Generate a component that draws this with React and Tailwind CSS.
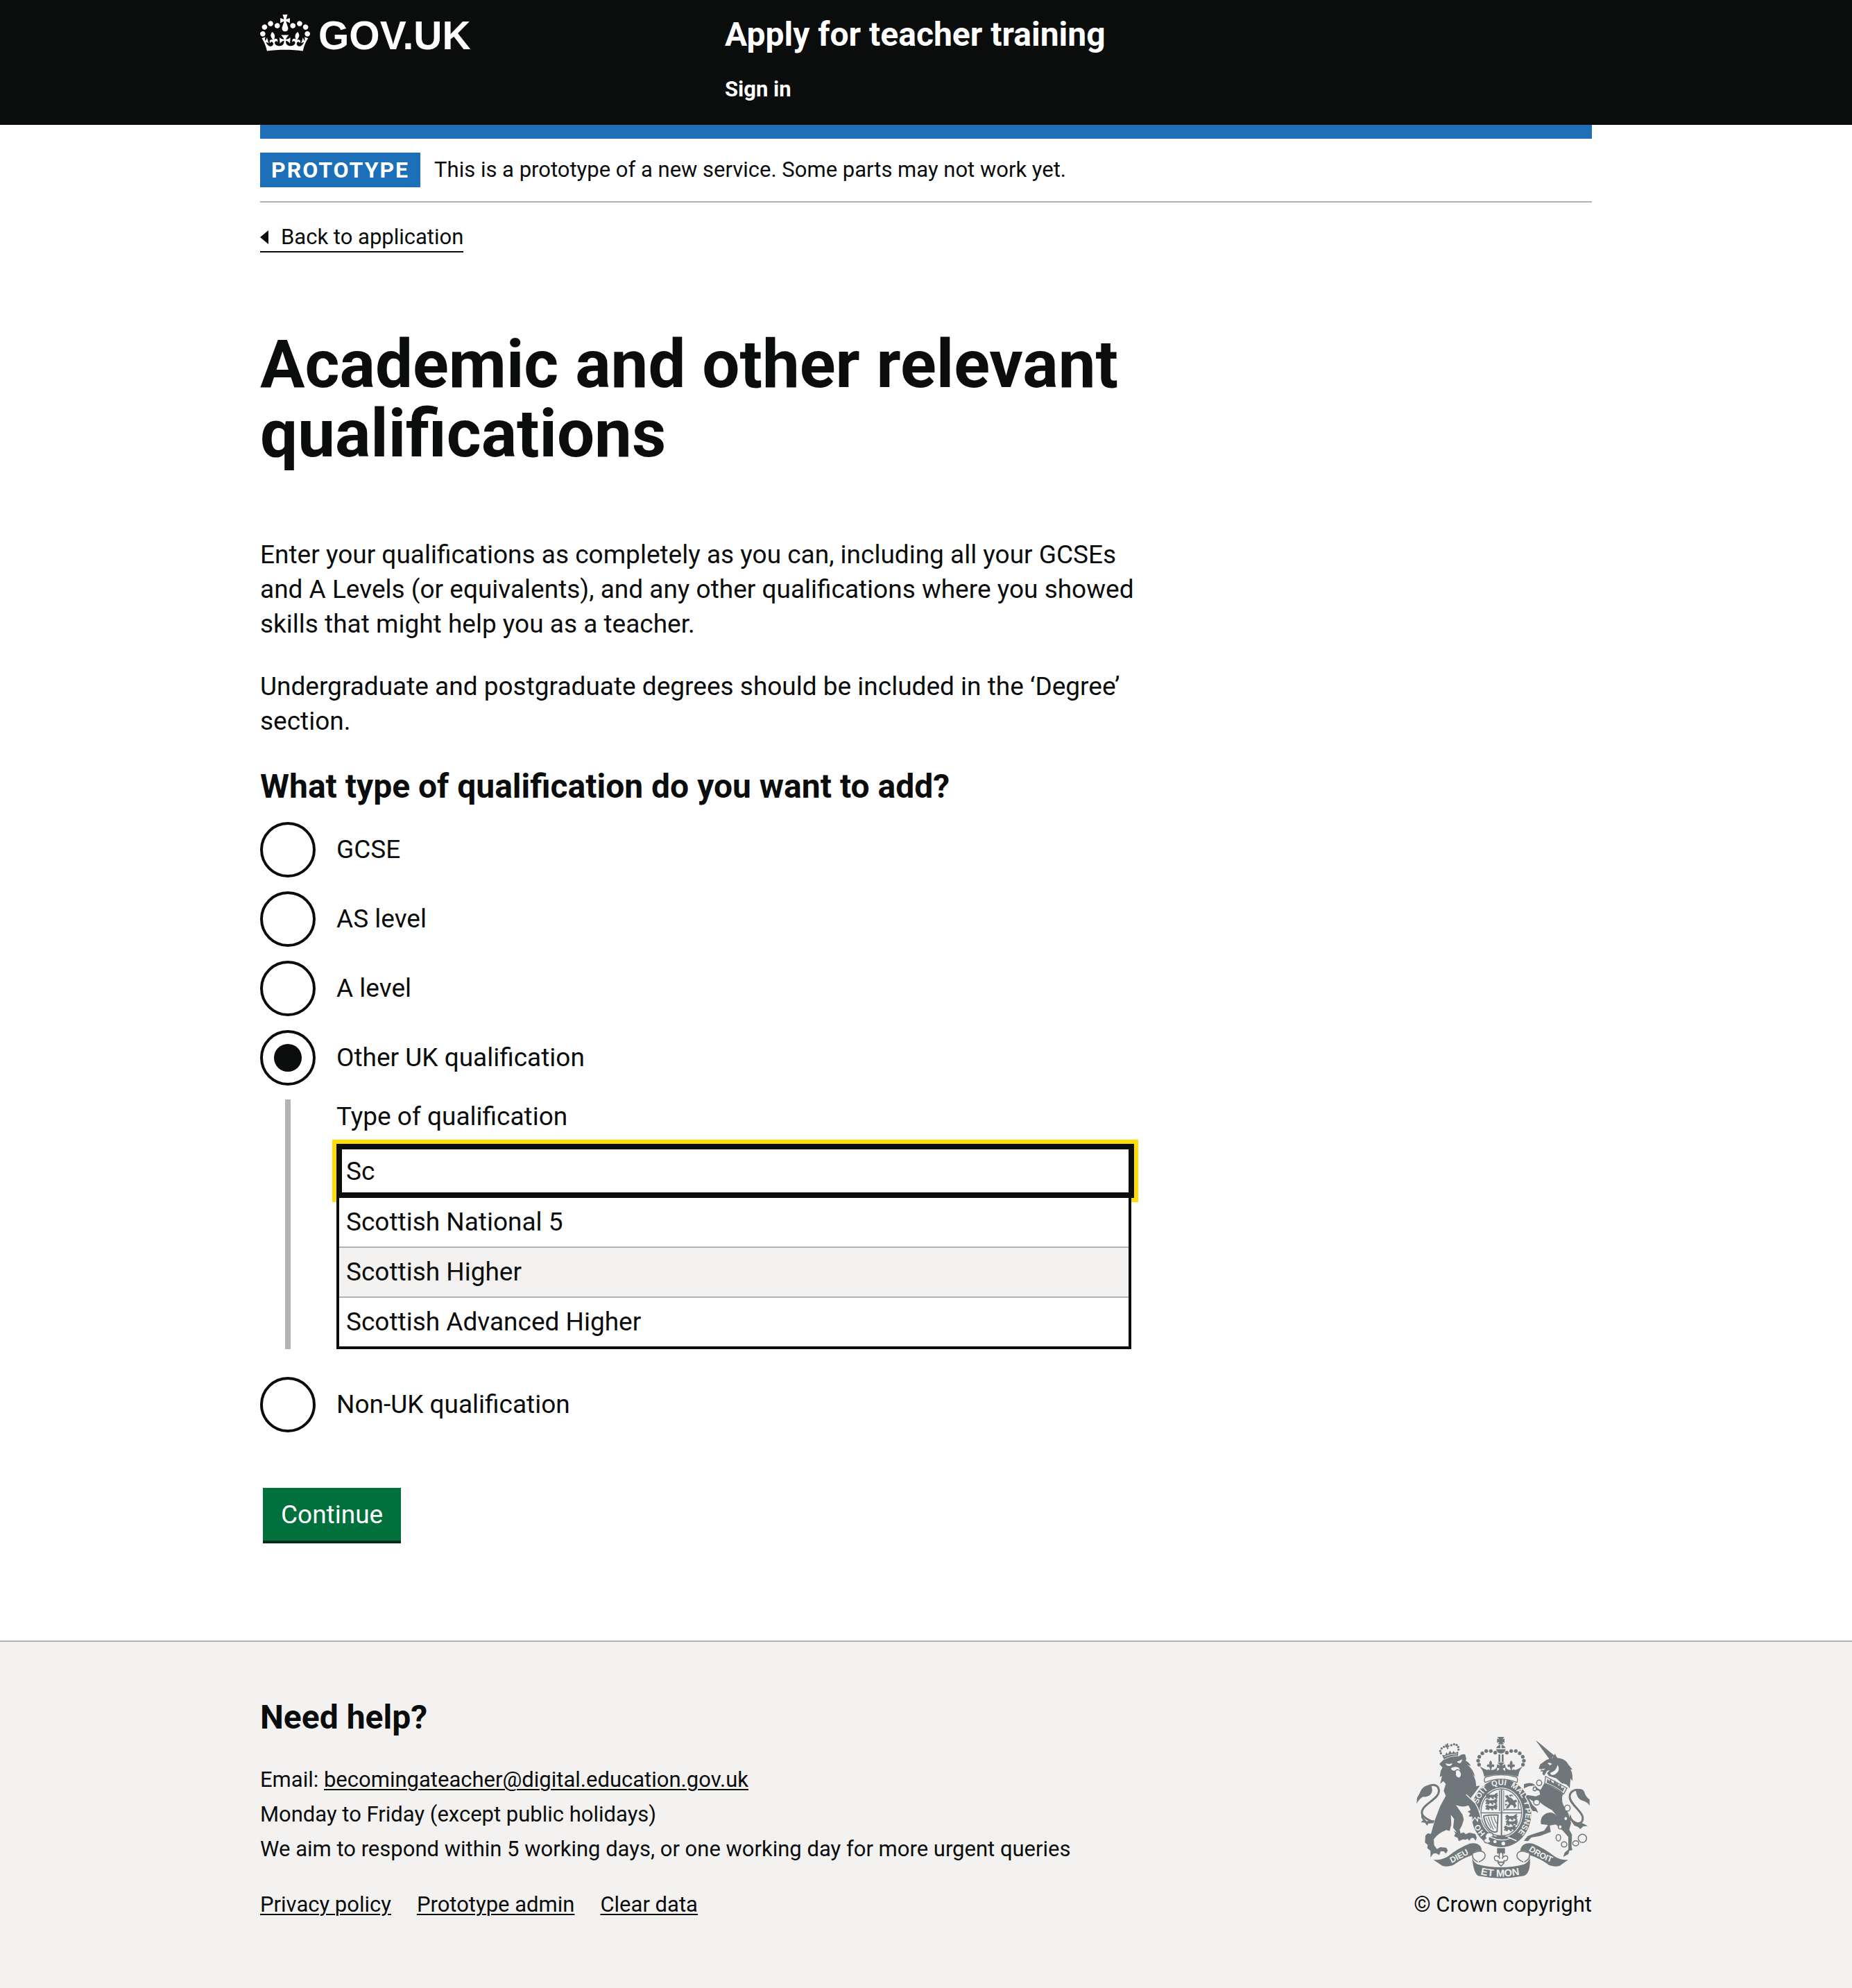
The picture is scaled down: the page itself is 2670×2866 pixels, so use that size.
import { useState } from 'react';

function Crown() {
  return (
    <svg aria-hidden="true" viewBox="0 0 132 97" className="h-[53px] w-[72px]" fill="currentColor">
      <path
        fillRule="evenodd"
        d="M25 30.2c3.5 1.5 7.7-.2 9.1-3.7 1.5-3.6-.2-7.8-3.9-9.2-3.6-1.4-7.6.3-9.1 3.9-1.4 3.5.3 7.5 3.9 9zM9 39.5c3.6 1.5 7.8-.2 9.2-3.7 1.5-3.6-.2-7.8-3.9-9.1-3.6-1.5-7.6.2-9.1 3.8-1.4 3.5.3 7.5 3.8 9zM4.4 57.2c3.5 1.5 7.7-.2 9.1-3.8 1.5-3.6-.2-7.7-3.9-9.1-3.5-1.5-7.6.3-9.1 3.8-1.4 3.5.3 7.6 3.9 9.1zm38.3-21.4c3.5 1.5 7.7-.2 9.1-3.8 1.5-3.6-.2-7.7-3.9-9.1-3.6-1.5-7.6.3-9.1 3.8-1.3 3.6.4 7.7 3.9 9.1zm64.4-5.6c-3.6 1.5-7.8-.2-9.1-3.7-1.5-3.6.2-7.8 3.8-9.2 3.6-1.4 7.7.3 9.2 3.9 1.3 3.5-.4 7.5-3.9 9zm15.9 9.3c-3.6 1.5-7.7-.2-9.1-3.7-1.5-3.6.2-7.8 3.7-9.1 3.6-1.5 7.7.2 9.2 3.8 1.5 3.5-.3 7.5-3.8 9zm4.7 17.7c-3.6 1.5-7.8-.2-9.2-3.8-1.5-3.6.2-7.7 3.9-9.1 3.6-1.5 7.7.3 9.2 3.8 1.3 3.5-.4 7.6-3.9 9.1zM89.3 35.8c-3.6 1.5-7.8-.2-9.2-3.8-1.4-3.6.2-7.7 3.9-9.1 3.6-1.5 7.7.3 9.2 3.8 1.4 3.6-.3 7.7-3.9 9.1zM69.7 17.7l8.9 4.7V9.3l-8.9 2.8c-.2-.3-.5-.6-.9-.9L72.4 0H59.6l3.5 11.2c-.3.3-.6.5-.9.9l-8.8-2.8v13.1l8.8-4.7c.3.3.6.7.9.9l-5 15.4v.1c-.2.8-.4 1.6-.4 2.4 0 4.1 3.1 7.5 7 8.1h.2c.3 0 .7.1 1 .1.4 0 .7 0 1-.1h.2c4-.6 7.1-4.1 7.1-8.1 0-.8-.1-1.7-.4-2.4V34l-5.1-15.4c.4-.2.7-.6 1-.9zM66 92.8c16.9 0 32.8 1.1 47.1 3.2 4-16.9 8.9-26.7 14-33.5l-9.6-3.4c1 4.9 1.1 7.2 0 10.2-1.5-1.4-3-4.3-4.2-8.7L108.6 76c2.8-2 5-3.2 7.5-3.3-4.4 9.4-10 11.9-13.6 11.2-4.3-.8-6.3-4.6-5.6-7.9 1-4.7 5.7-5.9 8-.5 4.3-8.7-3-11.4-7.6-8.8 7.1-7.2 7.9-13.5 2.1-21.1-8 6.1-8.1 12.3-4.5 20.8-4.7-5.4-12.1-2.5-9.5 6.2 3.4-5.2 7.9-2 7.2 3.1-.6 4.3-6.4 7.8-13.5 7.2-10.3-.9-10.9-8-11.2-13.8 2.5-.5 7.1 1.8 11 7.3L80.2 60c-4.1 4.4-8 5.3-12.3 5.4 1.4-4.4 8-11.6 8-11.6H55.5s6.4 7.2 7.9 11.6c-4.2-.1-8-1-12.3-5.4l1.4 16.4c3.9-5.5 8.5-7.7 10.9-7.3-.3 5.8-.9 12.8-11.1 13.8-7.2.6-12.9-2.9-13.5-7.2-.7-5 3.8-8.3 7.1-3.1 2.7-8.7-4.6-11.6-9.4-6.2 3.7-8.5 3.6-14.7-4.6-20.8-5.8 7.6-5 13.9 2.2 21.1-4.7-2.6-11.9.1-7.7 8.8 2.3-5.5 7.1-4.2 8.1.5.7 3.3-1.3 7.1-5.7 7.9-3.5.7-9-1.8-13.5-11.2 2.5.1 4.7 1.3 7.5 3.3l-4.7-15.4c-1.2 4.4-2.7 7.2-4.3 8.7-1.1-3-.9-5.3 0-10.2l-9.5 3.4c5 6.9 9.9 16.7 14 33.5 14.8-2.1 30.8-3.2 47.7-3.2z"
      />
    </svg>
  );
}

const INK = '#6f777b';
const PAPER = '#f3f2f1';

const CROWN_BEADS = [
  [428, 135], [409, 128], [389, 128], [372, 138], [359, 153], [354, 170], [358, 187],
  [478, 135], [497, 128], [517, 128], [534, 138], [547, 153], [552, 170], [548, 187],
];

function Fleur({ x, y, s = 1 }) {
  return (
    <path
      transform={`translate(${x} ${y}) scale(${s})`}
      d="M0-18C8-9 7-3 3 3C8-4 16-2 16 5C16 10 10 12 7 8C6 13 3 14 3 20H-3C-3 14-6 13-7 8C-10 12-16 10-16 5C-16-2-8-4-3 3C-7-3-8-9 0-18Z"
    />
  );
}

function Passant({ x, y }) {
  return (
    <path
      transform={`translate(${x} ${y})`}
      stroke={INK}
      strokeWidth="2.5"
      d="M0 3L6-3L12-1L16 3L36 2L42-4L50-6L47 0L52 4L46 8L50 13L44 17L38 11L30 12L34 18L28 19L23 12L14 12L16 18L9 18L10 12L4 17L0 14L6 9L3 7Z"
    />
  );
}

function RoyalArms() {
  return (
    <svg aria-hidden="true" viewBox="84 64 756 618" className="h-[206px] w-[252px]" fill={INK}>
      <defs>
        <path id="garter" d="M454 513A105 119 0 0 1 454 275A105 119 0 0 1 454 513" />
        <path id="motto-left" d="M232 616Q285 592 334 560" />
        <path id="motto-mid" d="M364 662Q452 682 548 660" />
        <path id="motto-right" d="M567 554Q616 592 684 615" />
      </defs>

      {/* Central crown */}
      <path d="M437 67H467L459 78L468 74V93L459 88L465 99H440L446 88L436 93V74L446 78Z" />
      <path d="M450 101V116H432Q436 104 450 101ZM455 101V116H473Q469 104 455 101ZM432 120H473Q470 138 453 139Q436 138 432 120Z" />
      {CROWN_BEADS.map(([x, y]) => <circle key={`${x}-${y}`} cx={x} cy={y} r="8" />)}
      <path d="M442 143H450V175H442ZM456 143H464V175H456Z" />
      <path d="M360 194L380 205L392 210L403 206L415 210Q430 208 434 198L437 185L450 192L438 177H468L456 192L470 185L473 198Q478 208 492 210L503 206L515 210L528 205L547 194Q529 215 527 239Q452 218 380 239Q377 214 360 194Z" />
      <Fleur x={408} y={187} />
      <Fleur x={497} y={187} />
      <path d="M440 212L447 205L436 200V215ZM467 212L460 205L471 200V215ZM396 206L404 200V212ZM502 200L510 206L502 212Z" fill={PAPER} />
      <path d="M386 241Q452 220 520 241Q528 250 522 264Q452 236 384 264Q376 250 386 241Z" fill={PAPER} stroke={INK} strokeWidth="4" />

      {/* Garter and shield */}
      <ellipse cx="454" cy="397" rx="130" ry="147" />
      <ellipse cx="454" cy="394" rx="94" ry="108" fill={PAPER} />
      <ellipse cx="454" cy="394" rx="88" ry="102" fill="none" stroke={INK} strokeWidth="4" />
      <path d="M452 294H458V494H452ZM366 393H542V398H366Z" />
      <path d="M444 298H448V388H444ZM463 298H466V388H463ZM463 380H538V384H463ZM526 340H530V384H526Z" />
      <g>
        <Passant x={388} y={316} />
        <Passant x={386} y={340} />
        <Passant x={386} y={364} />
        <Passant x={472} y={408} />
        <Passant x={474} y={431} />
        <Passant x={466} y={455} />
        <path d="M470 322L482 318L488 328L497 330L508 342L518 338L523 346L514 352L520 366L510 376L506 364L496 360L486 374L474 378L478 366L488 356L482 346L470 350L472 340L480 338Z" />
        <path d="M487 318L500 316L508 326L500 322L492 326ZM470 356L482 358L472 366Z" />
      </g>
      <g fill="none" stroke={INK} strokeWidth="3.5">
        <path d="M380 408Q408 404 440 405L436 476Q420 484 404 468Q384 450 378 412Z" strokeWidth="6" />
        <path d="M388 416Q396 440 410 462M398 412Q406 442 420 468M410 411Q416 440 430 462M422 411Q426 430 434 442" />
      </g>
      <path d="M436 492H470L476 506H430Z" />
      <g fill={PAPER} fontFamily="Liberation Sans, sans-serif" fontWeight="700" fontSize="34">
        <text><textPath href="#garter" startOffset="76">HO</textPath></text>
        <text><textPath href="#garter" startOffset="212">SOIT</textPath></text>
        <text><textPath href="#garter" startOffset="312">QUI</textPath></text>
        <text><textPath href="#garter" startOffset="392">MAL</textPath></text>
        <text><textPath href="#garter" startOffset="478">Y</textPath></text>
        <text><textPath href="#garter" startOffset="508">PENSE</textPath></text>
      </g>
      <path d="M482 500L520 516M404 480L384 510" stroke={PAPER} strokeWidth="5" />
      <path d="M392 484Q410 476 420 490L416 500Q400 498 402 510L410 520Q396 532 382 522L378 512L388 506L384 496Z" fill={PAPER} stroke={INK} strokeWidth="4" />
      <path d="M402 497Q450 524 496 505" fill="none" stroke={PAPER} strokeWidth="4" />
      <circle cx="427" cy="520" r="7" fill={PAPER} />
      <circle cx="463" cy="528" r="8" fill={PAPER} />

      {/* Lion */}
      <g>
        <path
          d="M186 184L204 166Q236 147 272 150Q282 139 298 143L303 162L300 170Q317 178 322 193L308 188Q331 204 341 240L330 228Q346 252 345 280L362 278L349 296L332 318L322 332L338 351Q352 372 359 398L364 418L352 412L350 426L340 412L330 426L328 411L313 412L320 398L309 390L322 383L312 363Q288 374 258 362L286 402L292 424L284 450L274 468L278 484L292 480L300 488L316 481L342 487L348 502L344 516L334 504L324 504L316 516L308 507L300 512L288 510L270 518L266 504L250 496L256 484L236 456L232 474L216 470Q180 484 162 510L164 536L176 552L190 544L216 546L223 558L214 572L206 562L192 562L186 578L172 570L160 572L148 588V560L134 548L136 534L124 524L126 494L136 484L150 486L168 424L190 366L214 322L205 300L214 270L203 258L190 270L198 236L188 240L192 214L200 200Z"
          stroke={PAPER}
          strokeWidth="8"
          paintOrder="stroke"
        />
        <path d="M236 404L250 422L246 460L262 480L240 470L230 478L238 446Z" fill={PAPER} />
        <path d="M213 181Q228 188 242 180Q240 194 226 193Q216 192 213 181ZM262 174Q274 172 284 164Q286 176 276 180Q266 182 262 174ZM236 202Q254 192 270 200L276 212L264 206L250 214L240 210ZM258 214Q270 206 277 220Q284 234 272 243Q262 242 258 232Z" fill={PAPER} />
        <path d="M302 316L340 352" stroke={PAPER} strokeWidth="4" />
        <path d="M206 164L198 146L212 146L216 134L224 142L232 126L240 138L248 128L254 136L268 130L267 148Q234 148 206 164Z" stroke={PAPER} strokeWidth="3" paintOrder="stroke" />
        <path d="M208 152Q236 140 264 141" fill="none" stroke={PAPER} strokeWidth="2.5" />
        {[[190, 128], [193, 138], [196, 117], [206, 110], [238, 103], [250, 99], [261, 102], [268, 111], [269, 122]].map(([x, y]) => (
          <circle key={x} cx={x} cy={y} r="5" />
        ))}
        <path d="M212 98L218 101L219 94L226 97L223 104L230 104L228 111L223 110L226 118L220 120L218 112L212 112Z" />
        <path d="M162 436C120 420 100 402 116 378C130 352 190 330 184 296C180 272 156 270 134 282" fill="none" stroke={INK} strokeWidth="9" />
        <path d="M88 356L90 330Q102 312 108 296Q122 274 150 276Q162 298 148 316Q136 328 116 326Q98 336 88 356ZM108 396L118 418L132 432L146 428L166 428L160 440L138 442L134 452L124 438L106 436L116 428L108 416Z" />
      </g>

      {/* Unicorn */}
      <g>
        <path
          d="M640 268Q682 284 722 312Q712 334 722 360L744 398L756 440L748 468L760 490L758 540L762 556L748 560L744 574L722 586L728 568L744 554L744 500L722 474L690 446L664 450L668 478L620 496L584 502L570 518L552 516L568 496L590 488L640 472L656 448L626 444Q620 410 652 396Q676 388 694 408L674 384Q634 364 616 344L592 346L574 334L590 362L606 376L614 396L602 388L590 388L582 376L574 350L560 326L566 318L604 324L622 316L618 300L608 298L600 278L574 280L552 290V272Q572 262 594 270L612 290L624 296Z"
          stroke={PAPER}
          strokeWidth="8"
          paintOrder="stroke"
        />
        <path d="M603 82L612 88L684 148L664 166Z" />
        <path d="M616 204L622 186L650 166L676 158L686 140L696 158Q730 160 744 186L762 208L754 208Q764 226 762 258L754 246L750 290Q738 268 716 268L692 246L660 236L652 224L664 210L652 214L640 234L632 228L634 216L622 216L630 208Z" />
        <path d="M654 180Q664 176 674 184L664 190ZM698 188Q712 212 688 228Q668 238 666 222Q690 218 698 188ZM628 206L646 204L634 212Z" fill={PAPER} />
        <path d="M646 238Q690 262 738 288L724 314Q690 282 642 268Z" fill={PAPER} stroke={INK} strokeWidth="4" />
        <path d="M650 265L654 248L662 258L668 248L672 262L680 268L686 254L692 268L698 264L702 280L712 270L714 288L728 286L720 304Q690 280 650 265Z" />
        <g fill={PAPER} stroke={INK} strokeWidth="4.5">
          <ellipse cx="618" cy="266" rx="11" ry="12" />
          <ellipse cx="599" cy="292" rx="7" ry="8" />
          <ellipse cx="607" cy="350" rx="13" ry="12" />
          <ellipse cx="740" cy="375" rx="12" ry="13" />
          <ellipse cx="733" cy="420" rx="8" ry="9" />
          <ellipse cx="709" cy="456" rx="8" ry="9" />
          <ellipse cx="701" cy="503" rx="10" ry="14" />
          <ellipse cx="726" cy="532" rx="12" ry="11" />
          <ellipse cx="776" cy="527" rx="13" ry="11" />
          <circle cx="805" cy="506" r="18" />
        </g>
        <path d="M754 420C776 452 812 446 806 412C800 386 750 356 750 326C750 304 772 290 796 298" fill="none" stroke={INK} strokeWidth="9" />
        <path d="M776 296Q800 286 812 302Q818 326 836 338V364Q824 346 804 342Q780 336 776 296ZM752 400L766 438L778 434L784 446L804 440L828 452L808 454L796 466L786 456L770 450Q756 430 748 420Z" />
      </g>

      {/* Fleur-de-lis badge below the garter */}
      <path d="M436 548H470V572H436Z" />
      <path d="M453 562C464 574 462 586 458 594C466 578 484 578 482 592C480 604 468 606 466 600V612L453 626L440 612V600C438 606 426 604 424 592C422 578 440 578 448 594C444 586 442 574 453 562Z" fill={PAPER} stroke={INK} strokeWidth="4.5" />
      <path d="M438 606H468V612H438Z" />

      {/* Motto scroll */}
      <path d="M160 598Q190 602 220 586Q270 546 318 528Q368 520 370 562L352 560Q336 562 330 578Q288 592 258 614Q236 632 200 625Z" />
      <path d="M744 598Q716 602 688 586Q636 546 590 528Q540 520 536 562L554 560Q572 564 576 578Q618 592 650 614Q670 632 706 625Z" />
      <path d="M336 568Q376 552 384 576Q388 596 356 608M330 576Q326 594 352 608M570 568Q530 552 522 576Q518 596 550 608M576 576Q580 594 554 608" fill="none" stroke={INK} strokeWidth="4.5" />
      <path d="M328 590Q334 610 352 618Q452 644 552 618Q572 610 578 590Q582 656 552 668Q452 688 354 668Q334 656 328 590Z" />
      <g fill={PAPER} fontFamily="Liberation Sans, sans-serif" fontWeight="700">
        <text fontSize="36"><textPath href="#motto-left" startOffset="8">DIEU</textPath></text>
        <text fontSize="44"><textPath href="#motto-mid">ET MON</textPath></text>
        <text fontSize="36"><textPath href="#motto-right" startOffset="6">DROIT</textPath></text>
      </g>
    </svg>
  );
}

function Radio({ id, label, checked, onSelect }) {
  return (
    <div className="flex items-center gap-[30px]">
      <input
        type="radio"
        name="qualification"
        id={id}
        checked={checked}
        onChange={() => onSelect(id)}
        className="grid size-20 shrink-0 cursor-pointer appearance-none place-content-center rounded-full border-4 border-[#0b0c0c] bg-white checked:before:size-10 checked:before:rounded-full checked:before:bg-[#0b0c0c] checked:before:content-['']"
      />
      <label htmlFor={id} className="cursor-pointer">{label}</label>
    </div>
  );
}

const OPTIONS = ['Scottish National 5', 'Scottish Higher', 'Scottish Advanced Higher'];
const LINK = 'underline decoration-2 underline-offset-3';

export default function App() {
  const [selected, setSelected] = useState('other-uk');
  const [query, setQuery] = useState('Sc');

  return (
    <div className="flex min-h-screen flex-col bg-white font-['Roboto',sans-serif] text-[37px] leading-[50px] text-[#0b0c0c]">
      <header className="bg-[#0b0c0c] px-[30px] text-white">
        <div className="mx-auto grid max-w-[1920px] grid-cols-[1fr_2fr] gap-[45px] pb-[26px]">
          <a href="#gov" className="flex items-start gap-3 self-start pt-[21px]">
            <Crown />
            <span className="font-['Liberation_Sans',sans-serif] text-[57px] leading-[60px] font-bold">GOV.UK</span>
          </a>
          <div className="pt-[25px]">
            <a href="#service" className="block text-5xl leading-[50px] font-bold">Apply for teacher training</a>
            <nav className="mt-[29px] text-[31px] font-bold"><a href="#sign-in">Sign in</a></nav>
          </div>
        </div>
      </header>

      <div className="px-[30px]">
        <div className="mx-auto max-w-[1920px]">
          <div className="h-5 bg-[#1d70b8]" />
          <div className="flex items-start gap-5 border-b-2 border-[#b1b4b6] py-5 text-[31px]">
            <strong className="bg-[#1d70b8] px-4 text-[32px] font-bold tracking-[2px] text-white">PROTOTYPE</strong>
            <span>This is a prototype of a new service. Some parts may not work yet.</span>
          </div>
          <a href="#application" className="mt-[30px] inline-flex items-center gap-[18px] border-b-2 border-[#0b0c0c] text-[31px] leading-[40px]">
            <svg aria-hidden="true" viewBox="0 0 12 20" className="h-5 w-3" fill="currentColor"><path d="M0 10L12 0V20Z" /></svg>
            Back to application
          </a>

          <main className="w-2/3 pt-[110px] pr-5">
            <h1 className="text-8xl leading-[100px] font-bold">Academic and other relevant qualifications</h1>
            <p className="mt-[100px]">
              Enter your qualifications as completely as you can, including all your GCSEs and A Levels (or equivalents), and any other qualifications where you showed skills that might help you as a teacher.
            </p>
            <p className="mt-10">
              Undergraduate and postgraduate degrees should be included in the ‘Degree’ section.
            </p>
            <form className="mt-11" onSubmit={(e) => e.preventDefault()}>
              <fieldset>
                <legend className="mb-[26px] text-5xl leading-[50px] font-bold">What type of qualification do you want to add?</legend>
                <div className="flex flex-col gap-5">
                  <Radio id="gcse" label="GCSE" checked={selected === 'gcse'} onSelect={setSelected} />
                  <Radio id="as-level" label="AS level" checked={selected === 'as-level'} onSelect={setSelected} />
                  <Radio id="a-level" label="A level" checked={selected === 'a-level'} onSelect={setSelected} />
                  <Radio id="other-uk" label="Other UK qualification" checked={selected === 'other-uk'} onSelect={setSelected} />
                  <div className="mb-5 ml-9 border-l-8 border-[#b1b4b6] pl-[66px]">
                    <label htmlFor="qualification-type" className="block">Type of qualification</label>
                    <input
                      id="qualification-type"
                      type="text"
                      autoComplete="off"
                      value={query}
                      onChange={(e) => setQuery(e.target.value)}
                      className="mt-[14px] block h-[78px] w-full rounded-none border-8 border-[#0b0c0c] bg-white px-[6px] outline-6 outline-[#ffdd00]"
                    />
                    <ul role="listbox" aria-label="Type of qualification" className="relative z-10 mr-1 border-x-4 border-b-4 border-[#0b0c0c] bg-white">
                      {OPTIONS.map((name, i) => (
                        <li
                          key={name}
                          role="option"
                          aria-selected={i === 1}
                          className="border-b-2 border-[#b1b4b6] px-[10px] py-[10px] last:border-b-0 aria-selected:bg-[#f3f2f1]"
                        >
                          {name}
                        </li>
                      ))}
                    </ul>
                  </div>
                  <Radio id="non-uk" label="Non-UK qualification" checked={selected === 'non-uk'} onSelect={setSelected} />
                </div>
              </fieldset>
              <button type="submit" className="mt-20 ml-1 block cursor-pointer border-b-4 border-[#002d18] bg-[#00703c] px-[26px] pt-[14px] pb-3 text-white">
                Continue
              </button>
            </form>
          </main>
        </div>
      </div>

      <footer className="mt-[140px] grow border-t-2 border-[#b1b4b6] bg-[#f3f2f1] px-[30px] pt-[84px] pb-24 text-[31px]">
        <div className="mx-auto flex max-w-[1920px] items-end justify-between">
          <div>
            <h2 className="text-5xl leading-[50px] font-bold">Need help?</h2>
            <ul className="mt-10">
              <li>Email: <a href="mailto:becomingateacher@digital.education.gov.uk" className={LINK}>becomingateacher@digital.education.gov.uk</a></li>
              <li>Monday to Friday (except public holidays)</li>
              <li>We aim to respond within 5 working days, or one working day for more urgent queries</li>
            </ul>
            <ul className="mt-[30px] flex gap-[37px]">
              <li><a href="#privacy" className={LINK}>Privacy policy</a></li>
              <li><a href="#admin" className={LINK}>Prototype admin</a></li>
              <li><a href="#clear" className={LINK}>Clear data</a></li>
            </ul>
          </div>
          <a href="#copyright" className="flex flex-col items-center gap-3">
            <RoyalArms />
            © Crown copyright
          </a>
        </div>
      </footer>
    </div>
  );
}
